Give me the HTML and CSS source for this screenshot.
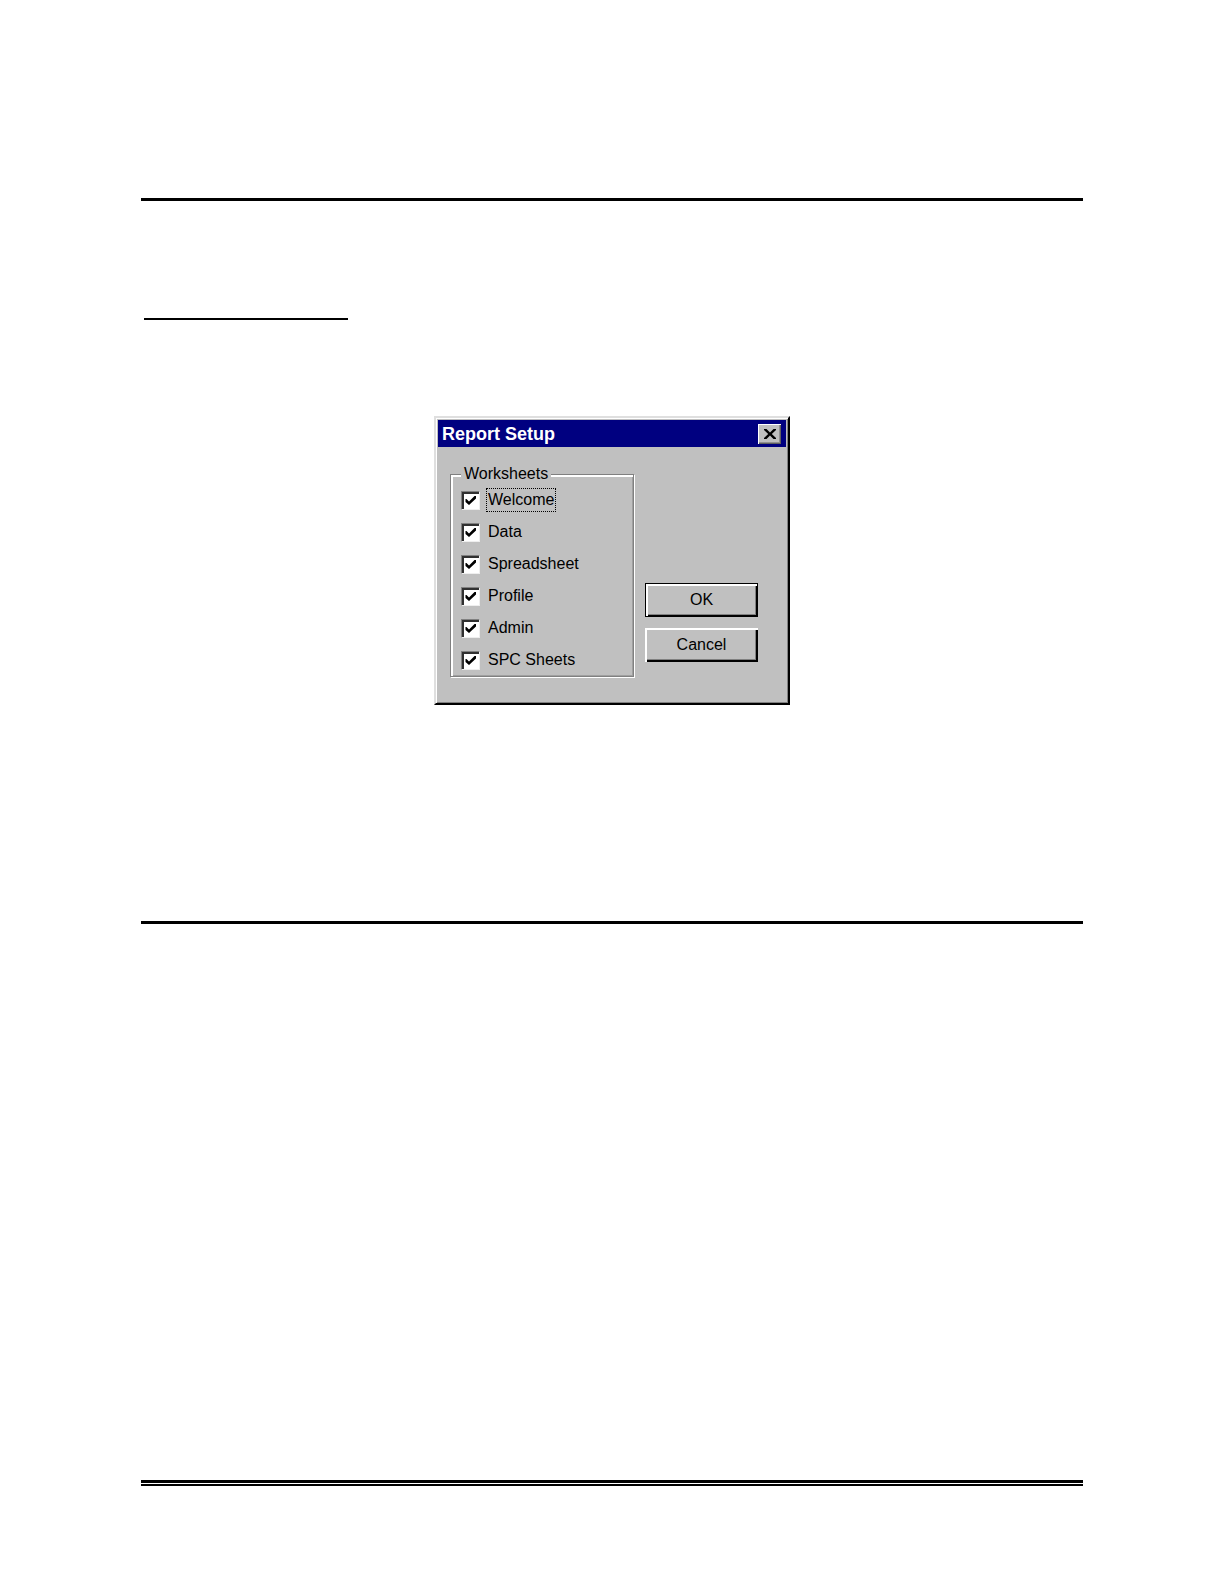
FILE: index.html
```html
<!DOCTYPE html>
<html lang="en">
<head>
<meta charset="utf-8">
<title>Report Setup</title>
<link rel="stylesheet" href="styles.css">
</head>
<body>
<main class="page">
  <hr class="rule">
  <hr class="subrule">
  <form class="dialog" role="dialog" aria-labelledby="dialog-title">
    <header class="titlebar">
      <h1 class="title" id="dialog-title">Report Setup</h1>
      <button class="close" type="button" aria-label="Close">
        <svg width="14" height="12" viewBox="0 0 14 12" aria-hidden="true"><path d="M1 1h2.500L7 4.500 10.500 1H13v1L8.800 6l4.200 4v1h-2.500L7 7.500 3.500 11H1v-1l4.200-4L1 2z"/></svg>
      </button>
    </header>
    <div class="content">
      <fieldset class="group">
        <legend class="legend">Worksheets</legend>
        <label class="option"><input class="check" type="checkbox" checked><span class="name focused">Welcome</span></label>
        <label class="option"><input class="check" type="checkbox" checked><span class="name">Data</span></label>
        <label class="option"><input class="check" type="checkbox" checked><span class="name">Spreadsheet</span></label>
        <label class="option"><input class="check" type="checkbox" checked><span class="name">Profile</span></label>
        <label class="option"><input class="check" type="checkbox" checked><span class="name">Admin</span></label>
        <label class="option"><input class="check" type="checkbox" checked><span class="name">SPC Sheets</span></label>
      </fieldset>
      <div class="actions">
        <button class="button primary" type="button">OK</button>
        <button class="button" type="button">Cancel</button>
      </div>
    </div>
  </form>
  <hr class="rule section-end">
  <hr class="footer-rule">
</main>
</body>
</html>
```
FILE: styles.css
```css
* {
  box-sizing: border-box;
}

body {
  margin: 0;
  background: #fff;
  color: #000;
  font: 16px/20px "Liberation Sans", Arial, sans-serif;
}

.page {
  display: flex;
  flex-direction: column;
  min-height: 100vh;
  padding: 198px 141px 98px;
}

.rule,
.subrule,
.footer-rule {
  width: 100%;
  margin: 0;
  border: 0;
  border-top: 3px solid #000;
}

.subrule {
  width: 204px;
  margin: 117px 0 96px 3px;
  border-top-width: 2px;
}

.section-end {
  margin-top: 216px;
}

.footer-rule {
  height: 6px;
  margin-top: auto;
  border-bottom: 2px solid #000;
}

.dialog {
  align-self: center;
  width: 356px;
  padding: 2px;
  border: 2px solid;
  border-color: #dfdfdf #000 #000 #dfdfdf;
  background: #c0c0c0;
  box-shadow: inset 1px 1px #fff, inset -1px -1px #808080;
}

.titlebar {
  display: flex;
  align-items: center;
  justify-content: space-between;
  height: 27px;
  padding: 0 5px 0 4px;
  background: #000080;
}

.title {
  margin: 0;
  color: #fff;
  font-size: 18px;
  line-height: 24px;
}

.close,
.button {
  display: flex;
  align-items: center;
  justify-content: center;
  padding: 0;
  border: 0;
  background: #c0c0c0;
  color: #000;
  font: inherit;
}

.close {
  width: 23px;
  height: 20px;
  box-shadow: inset 1px 1px #fff, inset -1px -1px #606060, inset -2px -2px #909090;
}

.content {
  display: flex;
  gap: 11px;
  padding: 17px 28px 24px 12px;
}

.group {
  display: flex;
  flex-direction: column;
  flex: none;
  width: 184px;
  margin: 0;
  padding: 0 0 0 10px;
  border: 1px solid #808080;
  box-shadow: 1px 1px #fff, inset 2px 2px #fff, inset 0 0 0 1px #a0a0a0;
}

.legend {
  padding: 0 3px;
  background: #c0c0c0;
}

.option {
  display: flex;
  align-items: center;
  gap: 6px;
  height: 32px;
}

.check {
  appearance: none;
  width: 19px;
  height: 19px;
  margin: 0;
  border: 1px solid;
  border-color: #808080 #eee #eee #808080;
  background: #fff;
  box-shadow: inset 2px 2px #303030;
}

.check:checked {
  background: #fff url("data:image/svg+xml,%3Csvg xmlns='http://www.w3.org/2000/svg' viewBox='0 0 17 17'%3E%3Cpath d='M3.500 7h1L7 9.500 12.500 4H14v2.500L7 13 3.500 10z'/%3E%3C/svg%3E") center / 17px 17px no-repeat;
}

.name {
  padding: 1px;
  border: 1px dotted transparent;
}

.focused {
  border-color: #000;
}

.actions {
  display: flex;
  flex: 1;
  flex-direction: column;
  justify-content: flex-end;
  gap: 11px;
  padding-bottom: 15px;
}

.button {
  height: 34px;
  box-shadow: inset 2px 2px #fff, inset -2px -2px #000, inset -3px -3px #808080;
}

.primary {
  border: 1px solid #000;
  box-shadow: inset 2px 2px #fff, inset -1px -1px #000, inset -2px -2px #808080;
}
```
